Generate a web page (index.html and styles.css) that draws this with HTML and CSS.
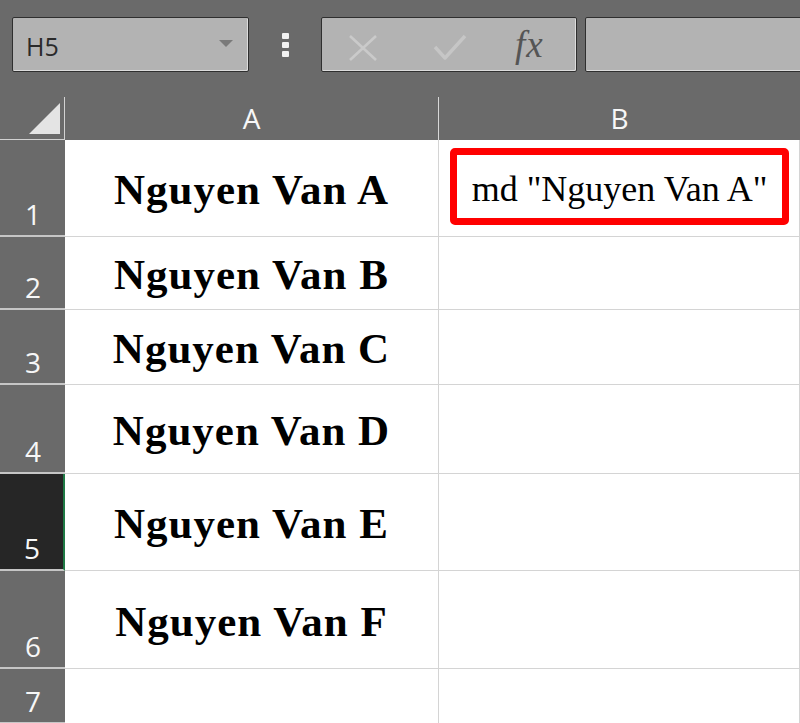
FILE: index.html
```html
<!DOCTYPE html>
<html>
<head>
<meta charset="utf-8">
<link rel="stylesheet" href="styles.css">
</head>
<body>
<div class="app">
  <div class="toolbar">
    <div class="namebox">
      <span class="name">H5</span>
      <svg class="caret" width="14" height="8" viewBox="0 0 14 8"><polygon points="0,0 14,0 7,7" fill="#7a7a7a"/></svg>
    </div>
    <div class="dots"><span></span><span></span><span></span></div>
    <div class="fxbuttons">
      <svg class="ico" width="30" height="28" viewBox="0 0 30 28"><path d="M2 2 L28 26 M28 2 L2 26" stroke="#cacaca" stroke-width="2.6" fill="none"/></svg>
      <svg class="ico" width="34" height="28" viewBox="0 0 34 28"><path d="M2 14 L12 25 L32 3" stroke="#c6c6c6" stroke-width="3.4" fill="none" stroke-linejoin="round"/></svg>
      <span class="fx">fx</span>
    </div>
    <div class="formula"></div>
  </div>
  <div class="grid">
    <div class="corner">
      <svg width="32" height="31" viewBox="0 0 32 31"><polygon points="31,0 31,31 0,31" fill="#e4e4e4"/></svg>
    </div>
    <div class="colhead">A</div>
    <div class="colhead last">B</div>

    <div class="rowhead">1</div>
    <div class="cell name-cell">Nguyen Van A</div>
    <div class="cell b1">
      <span class="formula-text">md "Nguyen Van A"</span>
      <div class="highlight"></div>
    </div>

    <div class="rowhead">2</div>
    <div class="cell name-cell">Nguyen Van B</div>
    <div class="cell"></div>

    <div class="rowhead">3</div>
    <div class="cell name-cell">Nguyen Van C</div>
    <div class="cell"></div>

    <div class="rowhead">4</div>
    <div class="cell name-cell">Nguyen Van D</div>
    <div class="cell"></div>

    <div class="rowhead selected">5</div>
    <div class="cell name-cell">Nguyen Van E</div>
    <div class="cell"></div>

    <div class="rowhead">6</div>
    <div class="cell name-cell">Nguyen Van F</div>
    <div class="cell"></div>

    <div class="rowhead">7</div>
    <div class="cell"></div>
    <div class="cell"></div>
  </div>
</div>
</body>
</html>
```
FILE: styles.css
```css
html, body {
  margin: 0;
  padding: 0;
}
body {
  width: 800px;
  height: 723px;
  overflow: hidden;
  background: #6a6a6a;
}
.app {
  width: 800px;
  height: 723px;
  overflow: hidden;
}
.toolbar {
  height: 95px;
  box-sizing: border-box;
  padding: 17px 0 0 12px;
  display: flex;
  align-items: flex-start;
}
.namebox, .fxbuttons, .formula {
  height: 55px;
  box-sizing: border-box;
  background: #b3b3b3;
  border: 1.5px solid #2f2f2f;
  border-radius: 2px;
  box-shadow: inset -1px -1px 0 #dcdcdc;
}
.namebox {
  width: 237px;
  display: flex;
  align-items: center;
  justify-content: space-between;
  padding: 3px 15px 0 13px;
}
.name {
  font-family: "Open Sans", "Noto Sans", sans-serif;
  font-size: 25px;
  color: #2a2a2a;
  line-height: 1;
}
.caret {
  margin-top: -4px;
}
.dots {
  width: 72px;
  height: 55px;
  display: flex;
  flex-direction: column;
  align-items: center;
  justify-content: center;
  gap: 3px;
}
.dots span {
  display: block;
  width: 7px;
  height: 6px;
  border-radius: 1px;
  background: #f2f2f2;
}
.fxbuttons {
  width: 256px;
  display: flex;
  align-items: center;
  padding: 0 0 0 26px;
}
.fxbuttons .ico:nth-child(1) {
  margin-top: 6px;
}
.fxbuttons .ico:nth-child(2) {
  margin-left: 55px;
  margin-top: 5px;
}
.fx {
  margin-left: 48px;
  font-family: "Liberation Serif", "Times New Roman", serif;
  font-style: italic;
  font-size: 37px;
  color: #555555;
  line-height: 1;
  letter-spacing: 1px;
}
.formula {
  flex: 1;
  margin-left: 8px;
  margin-right: -10px;
}

.grid {
  display: grid;
  grid-template-columns: 65px 374px 1fr;
  grid-template-rows: 45px 97px 73px 75px 89px 97px 98px 55px;
}
.corner {
  box-sizing: border-box;
  margin-top: 2px;
  border-right: 1px solid #d2d2d2;
  border-bottom: 1px solid #d2d2d2;
  display: flex;
  align-items: flex-end;
  justify-content: flex-end;
  padding: 0 3px 5px 0;
}
.colhead {
  box-sizing: border-box;
  margin-top: 2px;
  border-right: 1px solid #d8d8d8;
  display: flex;
  align-items: center;
  justify-content: center;
  font-family: "Open Sans", "Noto Sans", sans-serif;
  font-size: 28px;
  color: #f7f7f7;
  line-height: 1;
  padding-bottom: 2px;
}
.colhead.last {
  border-right: none;
}
.rowhead {
  box-sizing: border-box;
  background: #6a6a6a;
  border-bottom: 2px solid #c6c6c6;
  display: flex;
  align-items: flex-end;
  justify-content: center;
  font-family: "Open Sans", "Noto Sans", sans-serif;
  font-size: 28px;
  line-height: 1;
  color: #f7f7f7;
  padding: 0 0 7px 1px;
}
.rowhead.selected {
  background: #262626;
  border-right: 2px solid #1f7a45;
}
.cell {
  box-sizing: border-box;
  background: #ffffff;
  border-right: 1.5px solid #d4d4d4;
  border-bottom: 1.5px solid #d4d4d4;
  display: flex;
  align-items: center;
  justify-content: center;
}
.name-cell {
  font-family: "Liberation Serif", "Times New Roman", serif;
  font-weight: bold;
  font-size: 43px;
  letter-spacing: 1px;
  line-height: 1;
  color: #000;
  padding-top: 3px;
}
.b1 {
  position: relative;
}
.formula-text {
  font-family: "Liberation Serif", "Times New Roman", serif;
  font-size: 36px;
  line-height: 1;
  color: #000;
  padding-left: 1px;
  padding-top: 2px;
}
.highlight {
  position: absolute;
  top: 8px;
  left: 11px;
  right: 10px;
  bottom: 11px;
  border: 7px solid #ff0000;
  border-radius: 5px;
}
```
